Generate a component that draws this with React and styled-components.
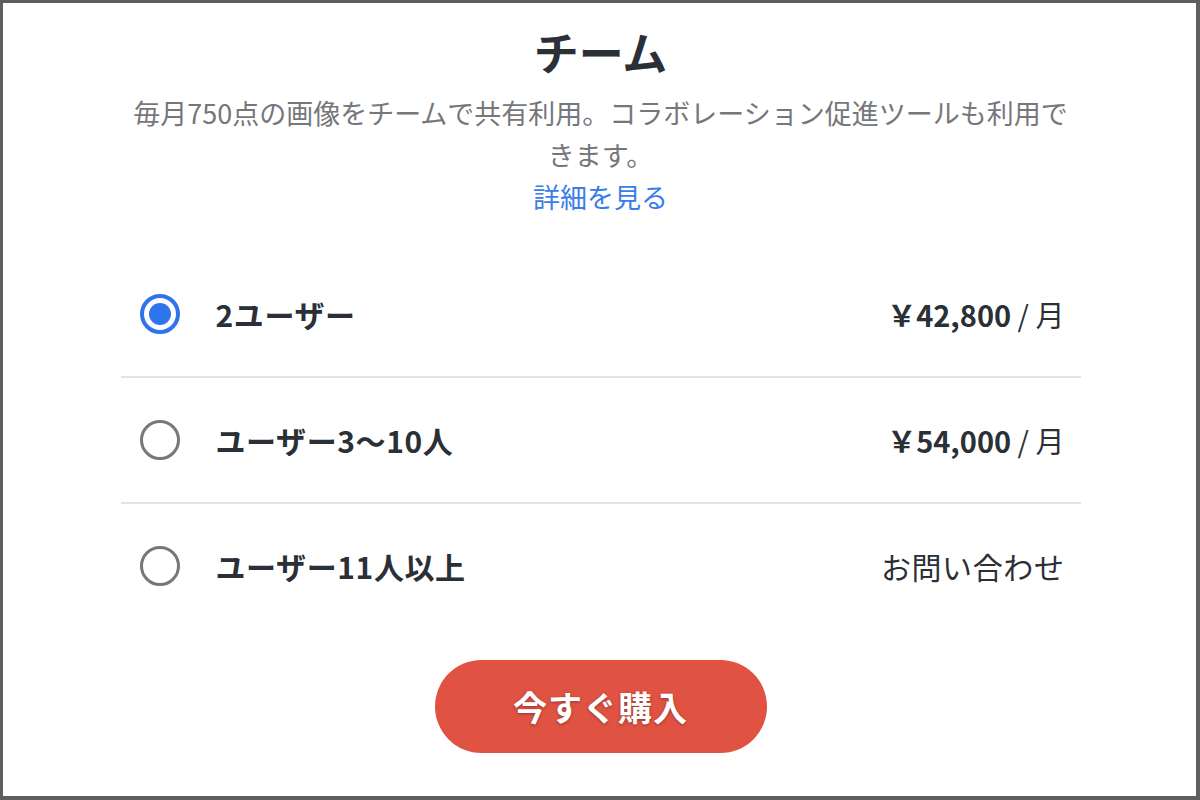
import React, { useState } from "react";
import styled, { createGlobalStyle } from "styled-components";

const GlobalStyle = createGlobalStyle`
    html, body {
        margin: 0;
        padding: 0;
        background: #ffffff;
    }
    body {
        font-family: "Noto Sans CJK JP", "Noto Sans", sans-serif;
    }
`

const Frame = styled.div`
    box-sizing: border-box;
    width: 1200px;
    height: 800px;
    border-style: solid;
    border-color: #5f5f5f;
    border-width: 3px 4px 4px 3px;
    background: #ffffff;
    display: flex;
    flex-direction: column;
    align-items: center;
    padding: 18px 0 0 2px;
`

const Title = styled.h1`
    margin: 0;
    font-size: 45px;
    line-height: 62px;
    font-weight: 700;
    color: #2b2f36;
`

const Description = styled.p`
    margin: 9px 0 0;
    max-width: 950px;
    text-align: center;
    font-size: 27px;
    line-height: 42px;
    color: #75777b;
`

const DetailLink = styled.a`
    display: block;
    font-size: 27px;
    line-height: 42px;
    color: #3a7de8;
    text-decoration: none;
`

const PlanList = styled.div`
    width: 960px;
    margin-top: 34px;
    display: flex;
    flex-direction: column;
`

const PlanRow = styled.label`
    height: 124px;
    display: flex;
    align-items: center;
    padding: 0 16px 0 19px;
    cursor: pointer;
    & + & {
        border-top: 2px solid #e3e3e3;
    }
`

const Radio = styled.span`
    box-sizing: border-box;
    width: 40px;
    height: 40px;
    flex-shrink: 0;
    border-radius: 50%;
    border: ${(p) => (p.$checked ? "4px solid #2f74ea" : "3.5px solid #777777")};
    display: flex;
    align-items: center;
    justify-content: center;
    &::after {
        content: "";
        width: 22px;
        height: 22px;
        border-radius: 50%;
        background: #2f74ea;
        display: ${(p) => (p.$checked ? "block" : "none")};
    }
`

const PlanName = styled.span`
    margin-left: 36px;
    flex: 1;
    font-size: 30px;
    letter-spacing: 0.6px;
    font-weight: 700;
    color: #2b2f36;
`

const Price = styled.span`
    font-size: ${(p) => (p.$contact ? "30px" : "29px")};
    letter-spacing: ${(p) => (p.$contact ? "0.6px" : "0")};
    color: #2b2f36;
    b {
        font-weight: 700;
    }
`

const BuyButton = styled.button`
    margin-top: 32px;
    width: 332px;
    height: 93px;
    border: none;
    border-radius: 47px;
    background: #e05242;
    color: #ffffff;
    font-family: "Noto Sans CJK JP", "Noto Sans", sans-serif;
    font-size: 34px;
    font-weight: 700;
    letter-spacing: 1px;
    text-shadow: 0 1px 3px rgba(0, 0, 0, 0.35);
    cursor: pointer;
`

const plans = [
    { id: "two", name: "2ユーザー", amount: "￥42,800", unit: "月" },
    { id: "small", name: "ユーザー3〜10人", amount: "￥54,000", unit: "月" },
    { id: "large", name: "ユーザー11人以上", contact: "お問い合わせ" },
]

const App = () => {
    const [selected, setSelected] = useState("two");

    return (
        <>
            <GlobalStyle />
            <Frame>
                <Title>チーム</Title>
                <Description>
                    毎月750点の画像をチームで共有利用。コラボレーション促進ツールも利用できます。
                    <DetailLink href="#">詳細を見る</DetailLink>
                </Description>
                <PlanList>
                    {plans.map((plan) => (
                        <PlanRow key={plan.id} onClick={() => setSelected(plan.id)}>
                            <Radio $checked={selected === plan.id} />
                            <PlanName>{plan.name}</PlanName>
                            {plan.contact ? (
                                <Price $contact>{plan.contact}</Price>
                            ) : (
                                <Price>
                                    <b>{plan.amount}</b> / {plan.unit}
                                </Price>
                            )}
                        </PlanRow>
                    ))}
                </PlanList>
                <BuyButton>今すぐ購入</BuyButton>
            </Frame>
        </>
    )
}

export default App;
